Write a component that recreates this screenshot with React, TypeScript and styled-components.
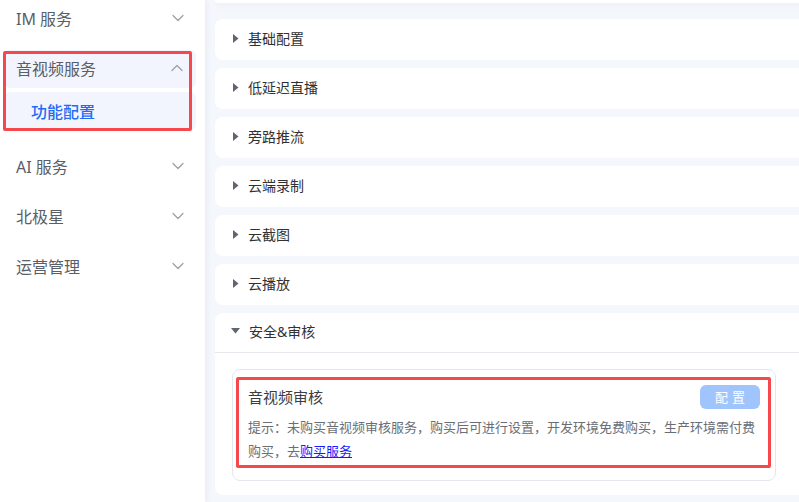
import React from "react";
import styled, { createGlobalStyle } from "styled-components";

const Global = createGlobalStyle`
  html, body { margin: 0; padding: 0; overflow: hidden; background: #f4f7fc; }
  body { font-family: "Noto Sans", "Noto Sans CJK SC", sans-serif; }
  * { box-sizing: border-box; }
`;

const Shell = styled.div`
  display: flex;
  width: 799px;
  height: 502px;
  overflow: hidden;
`;

const Sidebar = styled.aside`
  width: 205px;
  flex-shrink: 0;
  background: #fff;
  box-shadow: 2px 0 6px rgba(30, 50, 90, 0.05);
  display: flex;
  flex-direction: column;
  position: relative;
  z-index: 1;
`;

const MenuRow = styled.div<{ $h?: number; $mt?: number }>`
  height: ${(p) => p.$h ?? 40}px;
  margin-top: ${(p) => p.$mt ?? 0}px;
  display: flex;
  align-items: center;
  justify-content: space-between;
  padding: 0 21px 1px 16px;
  font-size: 16px;
  color: #5a5e66;
`;

const Group = styled.div`
  position: relative;
  margin: 14px 9px 0 4px;
  display: flex;
  flex-direction: column;
  gap: 4px;
`;

const GroupHead = styled.div`
  height: 38px;
  display: flex;
  align-items: center;
  justify-content: space-between;
  padding: 0 13px 3px 12px;
  background: #f2f5fd;
  border-radius: 6px;
  font-size: 16px;
  color: #5a5e66;
`;

const SubItem = styled.div`
  height: 38px;
  display: flex;
  align-items: center;
  padding-left: 27px;
  background: #f2f5fd;
  border-radius: 6px;
  font-size: 16px;
  font-weight: 500;
  color: #1f6cf5;
`;

const Highlight = styled.div<{ $inset: string }>`
  position: absolute;
  inset: ${(p) => p.$inset};
  border: 3px solid #f4484c;
  border-radius: 2px;
  pointer-events: none;
`;

const Chevron = ({ up }: { up?: boolean }) => (
  <svg width="12" height="8" viewBox="0 0 12 8" fill="none">
    <path
      d={up ? "M1 6.5 L6 1.5 L11 6.5" : "M1 1.5 L6 6.5 L11 1.5"}
      stroke="#9a9ea6"
      strokeWidth="1.2"
      strokeLinecap="round"
      strokeLinejoin="round"
    />
  </svg>
);

const Main = styled.main`
  flex: 1;
  min-width: 0;
  background: #f4f7fc;
  padding-left: 10px;
  display: flex;
  flex-direction: column;
  gap: 8px;
`;

const TopEdge = styled.div`
  height: 3px;
  margin-right: -11px;
  margin-bottom: 8px;
  background: #fff;
  border-radius: 0 0 8px 8px;
  box-shadow: 0 2px 6px rgba(30, 50, 90, 0.06);
`;

const Card = styled.section`
  margin-right: -11px;
  background: #fff;
  border-radius: 8px;
  flex-shrink: 0;
`;

const CardHead = styled.div<{ $open?: boolean }>`
  display: flex;
  align-items: center;
  gap: 9px;
  padding: 0 0 3px ${(p) => (p.$open ? 16 : 18)}px;
  font-size: 14px;
  color: #303133;
  border-bottom: ${(p) => (p.$open ? "1px solid #e6e8ee" : "none")};
  height: ${(p) => (p.$open ? 40 : 41)}px;
`;

const Caret = ({ open }: { open?: boolean }) =>
  open ? (
    <svg width="9" height="6" viewBox="0 0 9 6">
      <path d="M0 0 H9 L4.5 5.5 Z" fill="#5f6670" />
    </svg>
  ) : (
    <svg width="6" height="9" viewBox="0 0 6 9">
      <path d="M0 0 V9 L5.5 4.5 Z" fill="#5f6670" />
    </svg>
  );

const CardBody = styled.div`
  padding: 16px 34px 14px 17px;
`;

const ServiceBox = styled.div`
  position: relative;
  border: 1px solid #e4e7ee;
  border-radius: 8px;
  padding: 15px 15px 13px 15px;
  height: 112px;
`;

const BoxHead = styled.div`
  display: flex;
  align-items: center;
  justify-content: space-between;
  height: 24px;
`;

const BoxTitle = styled.div`
  font-size: 15px;
  color: #3a3d42;
  margin-top: -1px;
`;

const ConfigButton = styled.button`
  width: 60px;
  height: 24px;
  border: none;
  border-radius: 6px;
  background: #a0c5fd;
  color: #fff;
  font-family: inherit;
  font-size: 13px;
  letter-spacing: 4px;
  padding: 0 0 1px 4px;
`;

const Hint = styled.p`
  margin: 6px 0 0;
  font-size: 13px;
  line-height: 24px;
  color: #6b6e75;
`;

const BuyLink = styled.a`
  color: #1a1aff;
  text-decoration: underline;
`;

const sections = ["基础配置", "低延迟直播", "旁路推流", "云端录制", "云截图", "云播放"];

export default function App() {
  return (
    <>
      <Global />
      <Shell>
        <Sidebar>
          <MenuRow $h={36}>
            <span>IM 服务</span>
            <Chevron />
          </MenuRow>
          <Group>
            <GroupHead>
              <span>音视频服务</span>
              <Chevron up />
            </GroupHead>
            <SubItem>功能配置</SubItem>
            <Highlight $inset="1px 4px -1px -1px" />
          </Group>
          <MenuRow $mt={16}>
            <span>AI 服务</span>
            <Chevron />
          </MenuRow>
          <MenuRow $mt={10}>
            <span>北极星</span>
            <Chevron />
          </MenuRow>
          <MenuRow $mt={10}>
            <span>运营管理</span>
            <Chevron />
          </MenuRow>
        </Sidebar>
        <Main>
          <TopEdge />
          {sections.map((s) => (
            <Card key={s}>
              <CardHead>
                <Caret />
                <span>{s}</span>
              </CardHead>
            </Card>
          ))}
          <Card>
            <CardHead $open>
              <Caret open />
              <span>安全&amp;审核</span>
            </CardHead>
            <CardBody>
              <ServiceBox>
                <BoxHead>
                  <BoxTitle>音视频审核</BoxTitle>
                  <ConfigButton>配置</ConfigButton>
                </BoxHead>
                <Hint>
                  提示：未购买音视频审核服务，购买后可进行设置，开发环境免费购买，生产环境需付费购买，去
                  <BuyLink href="#">购买服务</BuyLink>
                </Hint>
                <Highlight $inset="7px 4px 12px 3px" />
              </ServiceBox>
            </CardBody>
          </Card>
        </Main>
      </Shell>
    </>
  );
}
